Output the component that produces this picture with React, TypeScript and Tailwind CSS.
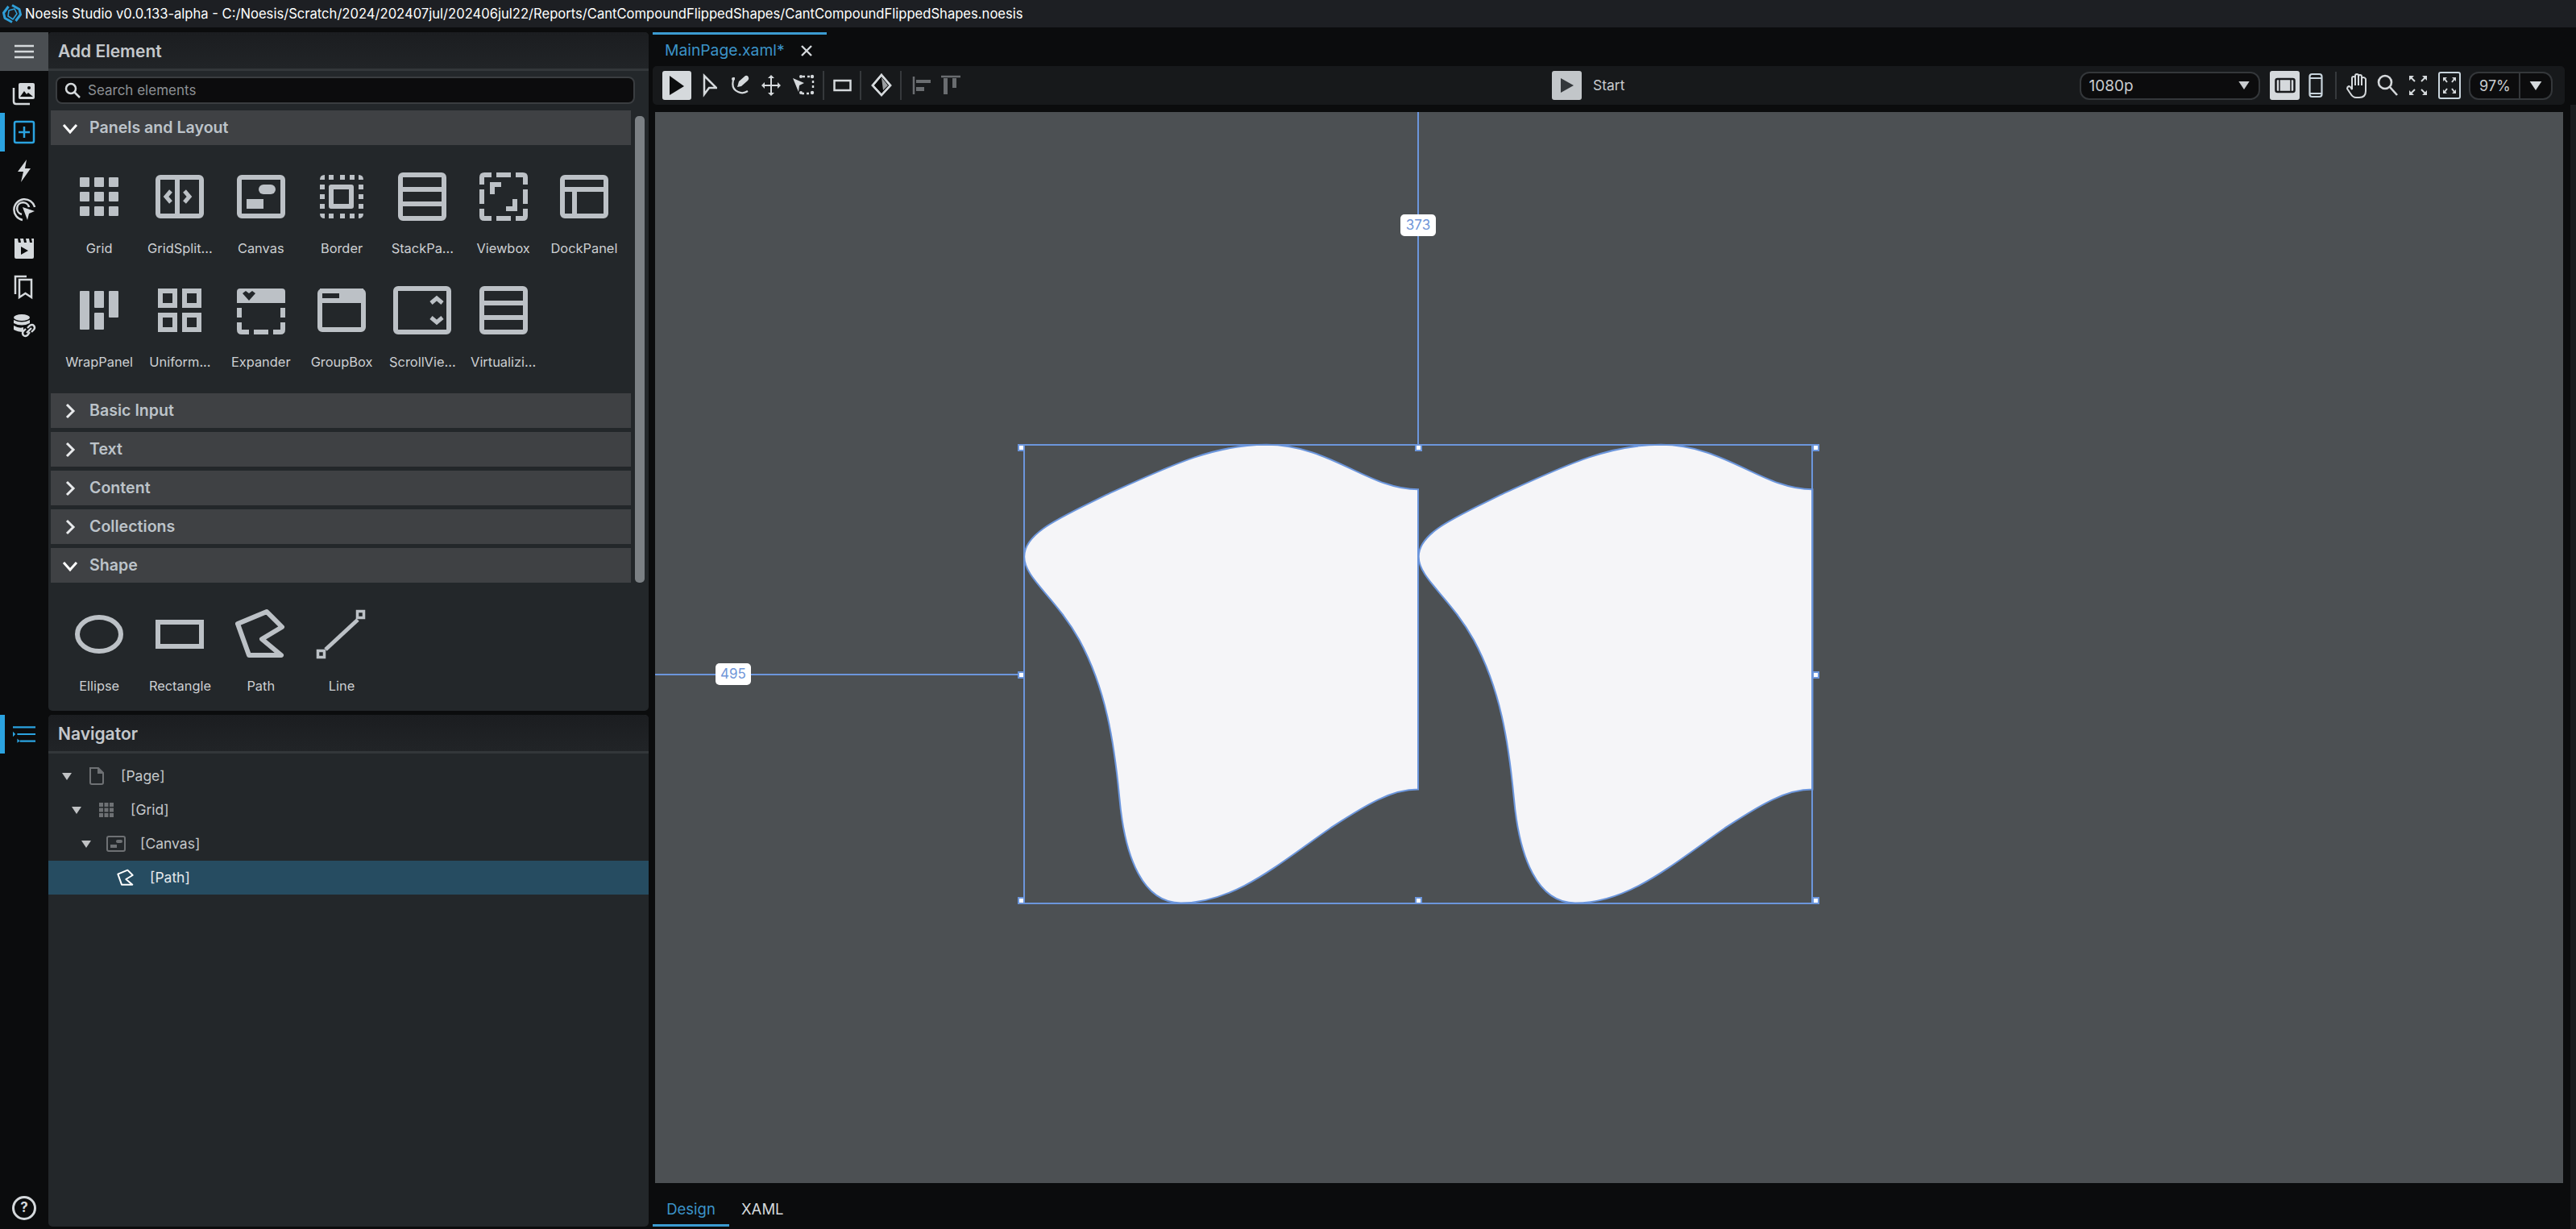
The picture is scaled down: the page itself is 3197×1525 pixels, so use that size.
import React from "react";

const C = "#bcc1c6";
const BG = "#23272a";

function Ico({ children }: { children: React.ReactNode }) {
  return (
    <svg width="72" height="72" viewBox="-36 -36 72 72" fill="none" stroke={C} strokeWidth="6" strokeLinejoin="round">
      {children}
    </svg>
  );
}

const Outer = () => <rect x="-27" y="-24" width="54" height="48" rx="3" />;
const Tall = () => <rect x="-27" y="-27" width="54" height="54" rx="3" />;

function StackShape() {
  return (
    <>
      <Tall />
      <path d="M-27 -9H27M-27 9H27" />
    </>
  );
}

const icons: Record<string, React.ReactNode> = {
  Grid: (
    <g fill={C} stroke="none">
      {[-24, -6, 12].flatMap((y) => [-24, -6, 12].map((x) => <rect key={x + "_" + y} x={x} y={y} width="12" height="12" rx="1" />))}
    </g>
  ),
  "GridSplit...": (
    <>
      <Outer />
      <path d="M-3 -24V24" />
      <path d="M-11 -7L-17 0L-11 7M6 -7L12 0L6 7" strokeWidth="5" strokeLinejoin="miter" />
    </>
  ),
  Canvas: (
    <>
      <Outer />
      <g fill={C} stroke="none">
        <rect x="-3" y="-15" width="21" height="12" rx="6" />
        <rect x="-18" y="3" width="21" height="12" />
      </g>
    </>
  ),
  Border: (
    <>
      <rect x="-13" y="-12" width="25" height="24" />
      <g fill={C} stroke="none">
        {[-15, -1, 11].flatMap((v) => [
          <rect key={"a" + v} x={v - 1} y="-27" width="6" height="6" />,
          <rect key={"b" + v} x={v - 1} y="21" width="6" height="6" />,
        ])}
        {[-15, -3, 9].flatMap((v) => [
          <rect key={"c" + v} x="-27" y={v} width="6" height="6" />,
          <rect key={"d" + v} x="21" y={v} width="6" height="6" />,
        ])}
        <path d="M-21 -27V-21H-27Q-27 -27 -21 -27ZM21 -27V-21H27Q27 -27 21 -27ZM-21 27V21H-27Q-27 27 -21 27ZM21 27V21H27Q27 27 21 27Z" />
      </g>
    </>
  ),
  "StackPa...": <StackShape />,
  Viewbox: (
    <>
      <path d="M-27 -15V-24Q-27 -27 -24 -27H-15M15 -27H24Q27 -27 27 -24V-15M27 15V24Q27 27 24 27H15M-15 27H-24Q-27 27 -27 24V15M-9 -27H9M-9 27H9M-27 -9V9M27 -9V9" strokeLinejoin="round" />
      <path d="M-14 -3V-15H-3M14 3V15H3" strokeLinejoin="miter" />
    </>
  ),
  DockPanel: (
    <>
      <Outer />
      <path d="M-27 -9H27M-12 -9V24" />
    </>
  ),
  WrapPanel: (
    <g fill={C} stroke="none">
      <rect x="-24" y="-24" width="12" height="48" rx="1" />
      <rect x="-6" y="-24" width="12" height="21" rx="1" />
      <rect x="-6" y="3" width="12" height="21" rx="1" />
      <rect x="12" y="-24" width="12" height="33" rx="1" />
    </g>
  ),
  "Uniform...": (
    <g strokeLinejoin="miter">
      <rect x="-24" y="-24" width="18" height="18" />
      <rect x="6" y="-24" width="18" height="18" />
      <rect x="-24" y="6" width="18" height="18" />
      <rect x="6" y="6" width="18" height="18" />
    </g>
  ),
  Expander: (
    <>
      <path d="M-30 -9V-23Q-30 -27 -26 -27H26Q30 -27 30 -23V-9Z" fill={C} stroke="none" />
      <path d="M-23 -21L-19 -24L-15 -21L-11 -24L-7 -21L-15 -12Z" fill={BG} stroke="none" />
      <path d="M-27 -3V9M27 -3V9M-27 15V24Q-27 27 -24 27H-15M27 15V24Q27 27 24 27H15M-9 27H9" />
    </>
  ),
  GroupBox: (
    <>
      <Outer />
      <path d="M-27 -27H27V-9H-27Z" fill={C} stroke="none" />
      <rect x="-24" y="-21" width="21" height="6" fill={BG} stroke="none" />
    </>
  ),
  "ScrollVie...": (
    <>
      <rect x="-33" y="-27" width="66" height="54" rx="3" />
      <path d="M11 -9L18 -15L25 -9M11 9L18 15L25 9" strokeWidth="5" strokeLinejoin="miter" />
    </>
  ),
  "Virtualizi...": <StackShape />,
  Ellipse: <ellipse cx="0" cy="0" rx="27" ry="21" />,
  Rectangle: <rect x="-27" y="-15" width="54" height="30" strokeLinejoin="miter" />,
  Path: <path d="M7 -28L26 -9L1 6L25 26H-15L-29 -13Z" />,
  Line: (
    <>
      <path d="M-20 19L20 -18" strokeWidth="5" />
      <rect x="19.5" y="-28.5" width="8" height="8" strokeWidth="3.5" strokeLinejoin="miter" />
      <rect x="-29.5" y="20.5" width="8" height="8" strokeWidth="3.5" strokeLinejoin="miter" />
    </>
  ),
};

function Item({ name }: { name: string }) {
  return (
    <div className="flex w-[100.3px] flex-col items-center">
      <Ico>{icons[name]}</Ico>
      <div className="mt-4 h-6 whitespace-nowrap text-[16.4px] leading-6 text-[#cdd0d3]">{name}</div>
    </div>
  );
}

function SectionHeader({ title, open }: { title: string; open?: boolean }) {
  return (
    <div className="flex h-[43px] w-[720px] items-center bg-[#3f4144] pl-[14px]">
      <svg width="20" height="20" viewBox="0 0 20 20" fill="none" stroke={open ? "#ffffff" : "#e8eaec"} strokeWidth="3" className="shrink-0">
        {open ? <path d="M2 6L10 15L18 6" /> : <path d="M6 2L14 10L6 18" />}
      </svg>
      <span className="ml-[14px] pt-px text-[19.6px] font-semibold text-[#bcc3c9]">{title}</span>
    </div>
  );
}

function Rail({ children, active }: { children: React.ReactNode; active?: boolean }) {
  return (
    <div className="relative flex h-12 w-[60px] items-center justify-center">
      {active && <div className="absolute left-0 top-0 h-12 w-1.5 bg-[#2ba3e0]" />}
      {children}
    </div>
  );
}

function RailSvg({ children, color = "#d5d9dc" }: { children: React.ReactNode; color?: string }) {
  return (
    <svg width="32" height="32" viewBox="0 0 32 32" fill="none" stroke={color} strokeWidth="2.5">
      {children}
    </svg>
  );
}

function Tri({ color = "#c0c2c4", w = 12, h = 9 }: { color?: string; w?: number; h?: number }) {
  return (
    <svg width={w} height={h} viewBox="0 0 12 9">
      <path d="M0 0H12L6 9Z" fill={color} />
    </svg>
  );
}

function TreeRow({ pad, label, icon, selected, arrow = true }: { pad: string; label: string; icon: React.ReactNode; selected?: boolean; arrow?: boolean }) {
  return (
    <div className={`flex h-[42px] items-center ${pad} ${selected ? "bg-[#264c61]" : ""}`}>
      <div className="flex w-3 justify-center">{arrow && <Tri />}</div>
      <div className="flex w-[61px] justify-center">{icon}</div>
      <span className={`text-[17.5px] ${selected ? "text-[#e6eaed]" : "text-[#c4c7ca]"}`}>{label}</span>
    </div>
  );
}

function Sep() {
  return <div className="mx-[10px] h-9 w-0.5 bg-[#36393c]" />;
}

function Tool({ w, children, className = "" }: { w: number; children: React.ReactNode; className?: string }) {
  return (
    <svg width={w} height="36" viewBox={`0 0 ${w} 36`} fill="none" stroke="#d5d9dc" strokeWidth="2.5" className={className}>
      {children}
    </svg>
  );
}

const shapeD =
  "M784 202C690 202 620 57 500 57C400 57 320 125 200 220C120 290 47 340 47 420C47 490 105 550 150 690C200 850 215 1020 225 1200C235 1400 270 1543 340 1543C440 1543 520 1420 620 1300C690 1220 735 1175 784 1175Z";

function Handle({ className }: { className: string }) {
  return <div className={`absolute h-[9px] w-[9px] border-2 border-[#6c96dc] bg-white ${className}`} />;
}

function Badge({ children, className }: { children: React.ReactNode; className: string }) {
  return (
    <div className={`absolute flex h-[27px] w-[44px] items-center justify-center rounded-[5px] bg-white text-[17px] text-[#7096d8] ${className}`}>{children}</div>
  );
}

export default function App() {
  return (
    <div className="flex h-[1525px] w-[3197px] flex-col overflow-hidden bg-[#0b0c0d] font-['Inter','Liberation_Sans',sans-serif]">
      <div className="flex h-[34px] items-center bg-[#1d1f23] pl-[3px]">
        <svg width="24" height="24" viewBox="0 0 24 24" fill="none" stroke="#2f9fd8" strokeWidth="3" strokeLinejoin="round">
          <path d="M12 1.5L21 6.5L22.5 13L16.5 21" />
          <path d="M12 22.5L3 17.5L1.5 11L7.5 3" />
          <path d="M8 8L15 6L18 12L13 19L7 15Z" strokeWidth="1.6" />
        </svg>
        <span className="ml-1 whitespace-nowrap text-[16.6px] text-white">
          Noesis Studio v0.0.133-alpha - C:/Noesis/Scratch/2024/202407jul/202406jul22/Reports/CantCompoundFlippedShapes/CantCompoundFlippedShapes.noesis
        </span>
      </div>

      <div className="mt-1.5 flex flex-1">
        <div className="flex w-[60px] flex-col">
          <div className="mb-1 flex h-12 items-center justify-center bg-[#4a4e52]">
            <svg width="24" height="18" viewBox="0 0 24 18" stroke="#d5d9dc" strokeWidth="2.4">
              <path d="M0 2H24M0 9H24M0 16H24" />
            </svg>
          </div>
          <Rail>
            <RailSvg>
              <rect x="9" y="3" width="20" height="20" rx="2" fill="#d5d9dc" stroke="none" />
              <path d="M3 9V26Q3 29 6 29H23" />
              <path d="M11 20L16 13L19 17L21 15L27 20Z" fill="#0b0c0d" stroke="none" />
              <circle cx="22" cy="9" r="2" fill="#0b0c0d" stroke="none" />
            </RailSvg>
          </Rail>
          <Rail active>
            <RailSvg color="#2ba3e0">
              <rect x="4" y="3" width="24" height="26" rx="2" />
              <path d="M16 9V23M9 16H23" />
            </RailSvg>
          </Rail>
          <Rail>
            <RailSvg>
              <path d="M19 2L8 17H15L12 30L24 13H17Z" fill="#d5d9dc" stroke="none" />
            </RailSvg>
          </Rail>
          <Rail>
            <RailSvg>
              <path d="M14 29A13 13 0 1 1 29 13" />
              <path d="M13 22A7.5 7.5 0 1 1 22 13" />
              <path d="M14 13L29 18L22 21L20 29Z" fill="#d5d9dc" stroke="none" />
            </RailSvg>
          </Rail>
          <Rail>
            <RailSvg>
              <path d="M4 4H8L9 9H12L11 4H15L16 9H19L18 4H22L23 9H26L25 4H28V27Q28 29 26 29H6Q4 29 4 27Z" fill="#d5d9dc" stroke="none" />
              <path d="M12 14L21 19L12 24Z" fill="#0b0c0d" stroke="none" />
            </RailSvg>
          </Rail>
          <Rail>
            <RailSvg>
              <path d="M5 25V3H19" />
              <path d="M10 7H25V29L17.5 24L10 29Z" />
            </RailSvg>
          </Rail>
          <Rail>
            <RailSvg>
              <ellipse cx="13" cy="6" rx="10" ry="4" fill="#d5d9dc" stroke="none" />
              <path d="M3 9Q13 14 23 9V13Q13 18 3 13Z" fill="#d5d9dc" stroke="none" />
              <path d="M3 16Q10 20 15 18V24Q8 24 3 21Z" fill="#d5d9dc" stroke="none" />
              <g stroke="#d5d9dc" strokeWidth="2.4">
                <path d="M20 19L23 16Q26 14 28 16Q30 19 28 21L25 24" />
                <path d="M23 24L20 28Q17 30 15 28Q13 25 15 23L18 20" />
                <path d="M19 25L25 19" />
              </g>
            </RailSvg>
          </Rail>
          <div className="mt-[459px]">
            <Rail active>
              <svg width="28" height="22" viewBox="0 0 26 20" stroke="#2ba3e0" strokeWidth="2">
                <path d="M0 2H26M5 10H26M8 18H26" />
                <path d="M0 7L3 10L0 13ZM5 15L8 18L5 20Z" fill="#2ba3e0" stroke="none" />
              </svg>
            </Rail>
          </div>
          <div className="mt-auto flex h-[50px] items-center justify-center pb-[3px]">
            <div className="flex h-[30px] w-[30px] items-center justify-center rounded-full border-[3px] border-[#d5d9dc] text-[17px] font-bold leading-none text-[#d5d9dc]">?</div>
          </div>
        </div>

        <div className="flex w-[745px] flex-col gap-[5px] pb-[3px]">
          <div className="h-[842px] overflow-hidden rounded-[5px] bg-[#23272a]">
            <div className="flex h-[45px] items-center border-b-0 bg-gradient-to-b from-[#1b1d20] to-[#212427] pl-3 pt-[2px] text-[21px] font-semibold text-[#c4c8cc]">Add Element</div>
            <div className="h-[3px] bg-[#33373a]" />
            <div className="relative h-[794px]">
              <div className="absolute right-[5px] top-[49px] h-[579px] w-3 rounded-[5px] bg-[#7b8084]" />
              <div className="ml-[9px] mt-[7px] flex h-[34px] w-[719px] items-center rounded-lg border-2 border-[#3a3d40] bg-[#0c0c0d] pl-[9px]">
                <svg width="20" height="20" viewBox="0 0 20 20" fill="none" stroke="#d5d9dc" strokeWidth="2.5">
                  <circle cx="8" cy="8" r="6" />
                  <path d="M12.5 12.5L19 19" />
                </svg>
                <span className="ml-[9px] pt-[2px] text-[17px] text-[#8c9094]">Search elements</span>
              </div>
              <div className="ml-[3px] mt-2 flex flex-col">
                <SectionHeader title="Panels and Layout" open />
                <div className="grid h-[308px] w-[720px] grid-cols-[repeat(7,100.3px)] content-start gap-y-[29px] pl-2.5 pt-[28px]">
                  {["Grid", "GridSplit...", "Canvas", "Border", "StackPa...", "Viewbox", "DockPanel", "WrapPanel", "Uniform...", "Expander", "GroupBox", "ScrollVie...", "Virtualizi..."].map((n) => (
                    <Item key={n} name={n} />
                  ))}
                </div>
                <div className="flex flex-col gap-[5px]">
                  <SectionHeader title="Basic Input" />
                  <SectionHeader title="Text" />
                  <SectionHeader title="Content" />
                  <SectionHeader title="Collections" />
                  <SectionHeader title="Shape" open />
                </div>
                <div className="flex pl-2.5 pt-[28px]">
                  {["Ellipse", "Rectangle", "Path", "Line"].map((n) => (
                    <Item key={n} name={n} />
                  ))}
                </div>
              </div>
            </div>
          </div>

          <div className="flex-1 overflow-hidden rounded-[5px] bg-[#23272a]">
            <div className="flex h-[45px] items-center bg-gradient-to-b from-[#1b1d20] to-[#212427] pl-3 pt-[3px] text-[21px] font-semibold text-[#c4c8cc]">Navigator</div>
            <div className="h-[3px] bg-[#33373a]" />
            <div className="pt-[7px]">
              <TreeRow
                pad="pl-[17px]"
                label="[Page]"
                icon={
                  <svg width="20" height="22" viewBox="0 0 20 22" fill="none" stroke="#6e7174" strokeWidth="2">
                    <path d="M2 1H12L18 7V19Q18 21 16 21H4Q2 21 2 19Z" />
                    <path d="M12 1V7H18" fill="#6e7174" />
                  </svg>
                }
              />
              <TreeRow
                pad="pl-[29px]"
                label="[Grid]"
                icon={
                  <svg width="18" height="18" viewBox="0 0 18 18" fill="#6e7174">
                    {[0, 6.5, 13].flatMap((y) => [0, 6.5, 13].map((x) => <rect key={x + "_" + y} x={x} y={y} width="5" height="5" />))}
                  </svg>
                }
              />
              <TreeRow
                pad="pl-[41px]"
                label="[Canvas]"
                icon={
                  <svg width="24" height="20" viewBox="0 0 24 20" fill="none" stroke="#6e7174" strokeWidth="2">
                    <rect x="1" y="1" width="22" height="18" rx="2" />
                    <rect x="12" y="5" width="8" height="4" rx="2" fill="#6e7174" stroke="none" />
                    <rect x="5" y="11" width="8" height="4" fill="#6e7174" stroke="none" />
                  </svg>
                }
              />
              <TreeRow
                pad="pl-[53px]"
                label="[Path]"
                arrow={false}
                selected
                icon={
                  <svg width="24" height="24" viewBox="-36 -36 72 72" fill="none" stroke="#ffffff" strokeWidth="6" strokeLinejoin="round">
                    <path d="M7 -28L26 -9L1 6L25 26H-15L-29 -13Z" />
                  </svg>
                }
              />
            </div>
          </div>
        </div>

        <div className="flex min-w-0 flex-1 flex-col">
          <div className="flex h-[42px] pl-[5px]">
            <div className="flex h-[42px] w-[216px] items-center border-t-[3px] border-[#3b9bd1] pl-[15px]">
              <span className="text-[19.3px] text-[#3b93c8]">MainPage.xaml*</span>
              <svg width="16" height="16" viewBox="0 0 16 16" stroke="#d5d9dc" strokeWidth="2.4" className="ml-[19px]">
                <path d="M2 2L14 14M14 2L2 14" />
              </svg>
            </div>
          </div>

          <div className="ml-[5px] flex h-12 w-[2373px] items-center rounded-[5px] bg-[#17191b] pl-3">
            <div className="flex h-9 w-9 items-center justify-center rounded-[3px] bg-[#d5d9dc]">
              <svg width="20" height="24" viewBox="0 0 20 24">
                <path d="M1 0L19 13L1 24Z" fill="#0b0c0d" />
              </svg>
            </div>
            <Tool w={18} className="ml-[14px]">
              <path d="M2 6L17 21L8 21L2 29Z" />
            </Tool>
            <Tool w={24} className="ml-[16px]">
              <path d="M5 8Q0 22 10 26Q16 29 22 25" strokeWidth="2.2" />
              <path d="M9 20L11 13L19 6Q22 5 23 8Q24 10 22 12L14 19Z" fill="#d5d9dc" stroke="none" />
              <circle cx="4" cy="10" r="2" fill="#d5d9dc" stroke="none" />
            </Tool>
            <Tool w={24} className="ml-[15px]">
              <path d="M12 6V30M1 18H23" strokeWidth="2" />
              <path d="M8 9L12 5L16 9ZM8 27L12 31L16 27ZM4 14L0 18L4 22ZM20 14L24 18L20 22Z" fill="#d5d9dc" stroke="none" />
            </Tool>
            <Tool w={28} className="ml-[14px]">
              <path d="M1 9L15 15L9 18L8 26Z" fill="#d5d9dc" stroke="none" />
              <path d="M13 7H22M26 12V22M12 28H22" strokeDasharray="3 3" strokeWidth="2.4" />
              <g fill="#d5d9dc" stroke="none">
                <circle cx="11" cy="7" r="2" />
                <circle cx="25" cy="7" r="2.2" />
                <circle cx="25" cy="27" r="2.2" />
                <circle cx="11" cy="27" r="2" />
              </g>
            </Tool>
            <Sep />
            <Tool w={23} className="ml-px">
              <rect x="1.5" y="12" width="20" height="12" />
            </Tool>
            <Sep />
            <Tool w={26} className="ml-0.5">
              <path d="M13 5L24 18L13 30L2 18Z" fill="#0b0c0d" />
              <path d="M13 8L21 18L15 24Z" fill="#9a9da0" stroke="none" />
              <path d="M13 5L24 18L13 30L2 18Z" />
            </Tool>
            <Sep />
            <Tool w={24} className="ml-[3px]">
              <path d="M2 7V29" stroke="#6a6d70" />
              <rect x="5" y="11" width="18" height="4" fill="#6a6d70" stroke="none" />
              <rect x="5" y="20" width="10" height="5" fill="#6a6d70" stroke="none" />
            </Tool>
            <Tool w={24} className="ml-3">
              <path d="M0 7H24" stroke="#6a6d70" />
              <rect x="3" y="9" width="5" height="20" fill="#6a6d70" stroke="none" />
              <rect x="14" y="9" width="5" height="12" fill="#6a6d70" stroke="none" />
            </Tool>

            <div className="ml-[734px] flex h-9 w-[37px] items-center justify-center rounded-[3px] bg-[#c2c6c9]">
              <svg width="16" height="18" viewBox="0 0 16 18">
                <path d="M0 0L16 9L0 18Z" fill="#33373a" />
              </svg>
            </div>
            <span className="ml-[14px] text-[17.5px] text-[#c9cccf]">Start</span>

            <div className="ml-[565px] flex h-[35px] w-[224px] items-center justify-between rounded-xl border-2 border-[#34373a] bg-[#0c0c0d] pl-[9px] pr-[10px]">
              <span className="pt-[2px] text-[19px] text-[#c9cccf]">1080p</span>
              <Tri color="#c9cccf" w={16} h={10} />
            </div>
            <div className="ml-3 flex h-9 w-[37px] items-center justify-center rounded-[3px] bg-[#d5d9dc]">
              <svg width="26" height="20" viewBox="0 0 26 20" fill="none" stroke="#17191b" strokeWidth="2.5">
                <rect x="1.5" y="2" width="23" height="16" rx="2" />
                <path d="M6 2V18M20 2V18" strokeWidth="1.5" />
              </svg>
            </div>
            <svg width="18" height="32" viewBox="0 0 18 32" fill="none" stroke="#c8d4dc" strokeWidth="2.2" className="ml-[11px]">
              <rect x="1.5" y="2" width="15" height="28" rx="3" />
              <path d="M1.5 7H16.5M1.5 26H16.5" />
            </svg>
            <div className="ml-[15px] h-[34px] w-0.5 bg-[#36393c]" />
            <svg width="26" height="34" viewBox="0 0 26 34" fill="none" stroke="#d5d9dc" strokeWidth="2" className="ml-3">
              <path d="M7 22V8Q7 6 9 6T11 8V5Q11 3 13 3T15 5V6Q15 4 17 4T19 6V9Q19 7 21 7T24 9V24Q24 32 16 32H12Q8 32 5 27L1 21Q1 19 3 18Q5 18 7 22ZM11 8V17M15 6V17M19 9V17" />
            </svg>
            <svg width="26" height="28" viewBox="0 0 26 28" fill="none" stroke="#d5d9dc" strokeWidth="2.6" className="ml-[12px]">
              <circle cx="10" cy="10" r="8" />
              <path d="M16 16L25 26" />
            </svg>
            <svg width="24" height="28" viewBox="0 0 24 28" stroke="#d5d9dc" strokeWidth="2" fill="#d5d9dc" className="ml-[13px]">
              <path d="M1 2H7L1 8ZM23 2H17L23 8ZM1 26H7L1 20ZM23 26H17L23 20Z" stroke="none" />
              <path d="M3 4L8 9M21 4L16 9M3 24L8 19M21 24L16 19" />
            </svg>
            <svg width="28" height="34" viewBox="0 0 28 34" fill="none" stroke="#c8d4dc" strokeWidth="2" className="ml-[13px]">
              <rect x="1" y="1" width="26" height="32" rx="2" />
              <path d="M6 7H11L6 12ZM22 7H17L22 12ZM6 27H11L6 22ZM22 27H17L22 22Z" fill="#d5d9dc" stroke="none" />
              <path d="M8 9L11 13M20 9L17 13M8 25L11 21M20 25L17 21" stroke="#d5d9dc" />
            </svg>
            <div className="ml-[10px] flex h-[35px] w-[104px] items-center rounded-xl border-2 border-[#34373a] bg-[#0c0c0d]">
              <span className="flex h-full w-[62px] items-center justify-center border-r-2 border-[#34373a] text-[18px] text-[#c9cccf]">97%</span>
              <span className="flex flex-1 justify-center">
                <Tri color="#d5d9dc" w={18} h={11} />
              </span>
            </div>
          </div>

          <div className="flex min-h-0 flex-1">
            <div className="ml-2 mt-[9px] flex min-w-0 flex-1 flex-col">
              <div className="relative h-[1329px] w-[2368px] bg-[#4c5053]">
                <svg width="1040" height="600" viewBox="0 0 1568 1568" preserveAspectRatio="none" className="absolute left-[427px] top-[391px]">
                  <path d={shapeD} fill="#f5f5f8" stroke="#6c96dc" strokeWidth="2" vectorEffect="non-scaling-stroke" />
                  <path d={shapeD} transform="translate(738 0)" fill="#f5f5f8" stroke="#6c96dc" strokeWidth="2" vectorEffect="non-scaling-stroke" />
                </svg>
                <div className="absolute left-[457px] top-[412px] h-[571px] w-[980px] border-2 border-[#6c96dc]" />
                <div className="absolute left-[946px] top-0 h-[412px] w-0.5 bg-[#6c96dc]" />
                <div className="absolute left-0 top-[697px] h-0.5 w-[458px] bg-[#6c96dc]" />
                <Badge className="left-[925px] top-[127px]">373</Badge>
                <Badge className="left-[75px] top-[684px]">495</Badge>
                <Handle className="left-[450px] top-[412px]" />
                <Handle className="left-[943px] top-[412px]" />
                <Handle className="left-[1436px] top-[412px]" />
                <Handle className="left-[450px] top-[694px]" />
                <Handle className="left-[1436px] top-[694px]" />
                <Handle className="left-[450px] top-[974px]" />
                <Handle className="left-[943px] top-[974px]" />
                <Handle className="left-[1436px] top-[974px]" />
              </div>
              <div className="flex h-[54px] items-stretch pt-[10px] text-[18.5px]">
                <div className="-ml-[3px] flex w-[95px] items-center justify-center border-b-[3px] border-[#3b9bd1] pt-[5px] text-[#3b93c8]">Design</div>
                <div className="ml-[15px] flex items-center pt-[2px] text-[#d5d9dc]">XAML</div>
              </div>
            </div>
            <div className="ml-[9px] w-[7px] bg-[#1a1c1e]" />
          </div>
        </div>
      </div>
    </div>
  );
}
